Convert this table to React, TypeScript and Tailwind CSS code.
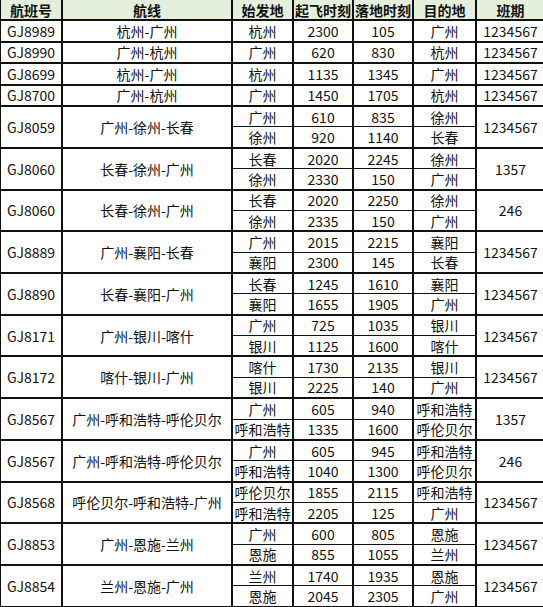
import React from "react";

type Leg = [string, string, string, string];

interface Flight {
  no: string;
  route: string;
  legs: Leg[];
  days: string;
}

const flights: Flight[] = [
  { no: "GJ8989", route: "杭州-广州", legs: [["杭州", "2300", "105", "广州"]], days: "1234567" },
  { no: "GJ8990", route: "广州-杭州", legs: [["广州", "620", "830", "杭州"]], days: "1234567" },
  { no: "GJ8699", route: "杭州-广州", legs: [["杭州", "1135", "1345", "广州"]], days: "1234567" },
  { no: "GJ8700", route: "广州-杭州", legs: [["广州", "1450", "1705", "杭州"]], days: "1234567" },
  {
    no: "GJ8059",
    route: "广州-徐州-长春",
    legs: [
      ["广州", "610", "835", "徐州"],
      ["徐州", "920", "1140", "长春"],
    ],
    days: "1234567",
  },
  {
    no: "GJ8060",
    route: "长春-徐州-广州",
    legs: [
      ["长春", "2020", "2245", "徐州"],
      ["徐州", "2330", "150", "广州"],
    ],
    days: "1357",
  },
  {
    no: "GJ8060",
    route: "长春-徐州-广州",
    legs: [
      ["长春", "2020", "2250", "徐州"],
      ["徐州", "2335", "150", "广州"],
    ],
    days: "246",
  },
  {
    no: "GJ8889",
    route: "广州-襄阳-长春",
    legs: [
      ["广州", "2015", "2215", "襄阳"],
      ["襄阳", "2300", "145", "长春"],
    ],
    days: "1234567",
  },
  {
    no: "GJ8890",
    route: "长春-襄阳-广州",
    legs: [
      ["长春", "1245", "1610", "襄阳"],
      ["襄阳", "1655", "1905", "广州"],
    ],
    days: "1234567",
  },
  {
    no: "GJ8171",
    route: "广州-银川-喀什",
    legs: [
      ["广州", "725", "1035", "银川"],
      ["银川", "1125", "1600", "喀什"],
    ],
    days: "1234567",
  },
  {
    no: "GJ8172",
    route: "喀什-银川-广州",
    legs: [
      ["喀什", "1730", "2135", "银川"],
      ["银川", "2225", "140", "广州"],
    ],
    days: "1234567",
  },
  {
    no: "GJ8567",
    route: "广州-呼和浩特-呼伦贝尔",
    legs: [
      ["广州", "605", "940", "呼和浩特"],
      ["呼和浩特", "1335", "1600", "呼伦贝尔"],
    ],
    days: "1357",
  },
  {
    no: "GJ8567",
    route: "广州-呼和浩特-呼伦贝尔",
    legs: [
      ["广州", "605", "945", "呼和浩特"],
      ["呼和浩特", "1040", "1300", "呼伦贝尔"],
    ],
    days: "246",
  },
  {
    no: "GJ8568",
    route: "呼伦贝尔-呼和浩特-广州",
    legs: [
      ["呼伦贝尔", "1855", "2115", "呼和浩特"],
      ["呼和浩特", "2205", "125", "广州"],
    ],
    days: "1234567",
  },
  {
    no: "GJ8853",
    route: "广州-恩施-兰州",
    legs: [
      ["广州", "600", "805", "恩施"],
      ["恩施", "855", "1055", "兰州"],
    ],
    days: "1234567",
  },
  {
    no: "GJ8854",
    route: "兰州-恩施-广州",
    legs: [
      ["兰州", "1740", "1935", "恩施"],
      ["恩施", "2045", "2305", "广州"],
    ],
    days: "1234567",
  },
];

const headers = ["航班号", "航线", "始发地", "起飞时刻", "落地时刻", "目的地", "班期"];

const cell = "border-2 border-[#111] p-0 text-center align-middle whitespace-nowrap leading-none";

export default function App() {
  return (
    <div className="w-[543px] h-[607px] overflow-hidden bg-white">
      <table
        className="w-[545px] h-[609px] table-fixed border-collapse text-[14px] text-[#111] -ml-px -mt-px"
        style={{ fontFamily: '"Noto Sans CJK SC", "Noto Sans", sans-serif' }}
      >
        <colgroup>
          <col className="w-[62px]" />
          <col className="w-[170px]" />
          <col className="w-[61px]" />
          <col className="w-[60px]" />
          <col className="w-[60px]" />
          <col className="w-[63px]" />
          <col className="w-[69px]" />
        </colgroup>
        <thead>
          <tr className="h-[21px] bg-[#e4efdb]">
            {headers.map((h) => (
              <th key={h} className={`${cell} border-t-0 pt-px font-bold`}>
                {h}
              </th>
            ))}
          </tr>
        </thead>
        <tbody>
          {flights.map((f, i) =>
            f.legs.map((leg, j) => (
              <tr key={`${i}-${j}`}>
                {j === 0 && (
                  <>
                    <td rowSpan={f.legs.length} className={cell}>
                      {f.no}
                    </td>
                    <td rowSpan={f.legs.length} className={cell}>
                      {f.route}
                    </td>
                  </>
                )}
                {leg.map((v, k) => (
                  <td
                    key={k}
                    className={`${cell} ${j === 1 ? "border-t-[1.5px]" : ""} ${j === 0 && f.legs.length > 1 ? "border-b-[1.5px]" : ""}`}
                  >
                    {v}
                  </td>
                ))}
                {j === 0 && (
                  <td rowSpan={f.legs.length} className={cell}>
                    {f.days}
                  </td>
                )}
              </tr>
            ))
          )}
        </tbody>
      </table>
    </div>
  );
}
